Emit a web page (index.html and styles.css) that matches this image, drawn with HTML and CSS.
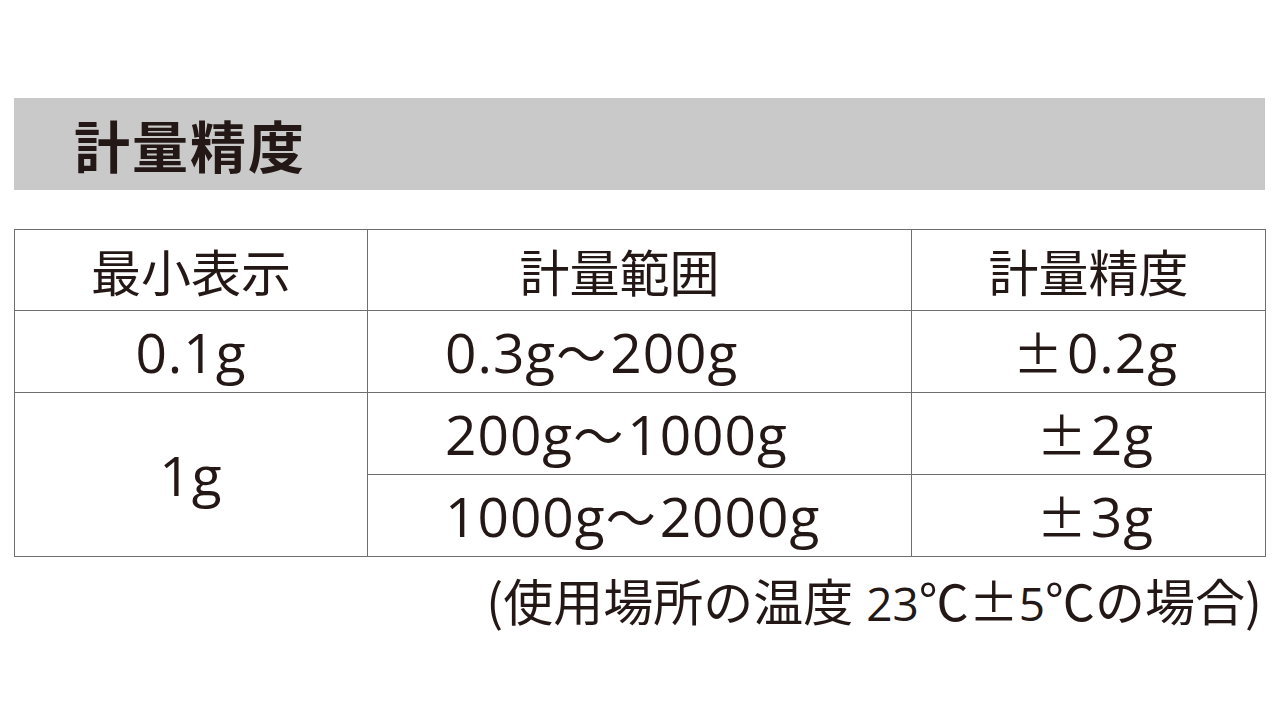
FILE: index.html
```html
<!DOCTYPE html>
<html lang="ja">
<head>
<meta charset="utf-8">
<link rel="stylesheet" href="styles.css">
</head>
<body>
<div class="page">
  <div class="title-bar"><h1 class="title">計量精度</h1></div>
  <table class="spec">
    <colgroup>
      <col class="c1"><col class="c2"><col class="c3">
    </colgroup>
    <tr class="head">
      <th>最小表示</th>
      <th class="range-head">計量範囲</th>
      <th>計量精度</th>
    </tr>
    <tr>
      <td>0.1g</td>
      <td class="range">0.3g<span class="cjk">～</span>200g</td>
      <td><span class="cjk">±</span>0.2g</td>
    </tr>
    <tr>
      <td rowspan="2">1g</td>
      <td class="range">200g<span class="cjk">～</span>1000g</td>
      <td><span class="cjk">±</span>2g</td>
    </tr>
    <tr>
      <td class="range">1000g<span class="cjk">～</span>2000g</td>
      <td><span class="cjk">±</span>3g</td>
    </tr>
  </table>
  <p class="note"><span class="cjk">(</span>使用場所の温度 <span class="small">23</span>℃<span class="cjk">±</span><span class="small">5</span>℃の場合<span class="cjk">)</span></p>
</div>
</body>
</html>
```

FILE: styles.css
```css
html, body {
  margin: 0;
  padding: 0;
  background: #ffffff;
}
body {
  font-family: "Open Sans", "Noto Sans CJK JP", sans-serif;
  color: #231815;
}
.page {
  padding: 98px 15px 0 14px;
}
.title-bar {
  background: #c9c9c9;
  height: 92px;
  display: flex;
  align-items: center;
  padding-left: 60px;
}
.title {
  margin: 0;
  font-family: "Noto Sans CJK JP", sans-serif;
  font-weight: 700;
  font-size: 56px;
  line-height: 1;
  letter-spacing: 2px;
}
.spec {
  margin-top: 39px;
  width: 1251px;
  border-collapse: collapse;
  table-layout: fixed;
}
.c1 { width: 353px; }
.c2 { width: 544px; }
.c3 { width: 354px; }
.spec th, .spec td {
  border: 1px solid #6f6f6f;
  height: 81px;
  padding: 0;
  font-weight: 400;
  font-size: 55px;
  letter-spacing: 1px;
  line-height: 1;
  text-align: center;
  vertical-align: middle;
}
.spec .head th {
  height: 80px;
  font-family: "Noto Sans CJK JP", sans-serif;
  font-size: 50px;
  letter-spacing: 0;
}
.spec th.range-head {
  padding-right: 40px;
}
.spec td.range {
  text-align: left;
  padding-left: 77px;
}
.cjk {
  font-family: "Noto Sans CJK JP", sans-serif;
  font-size: 50px;
}
.spec td .cjk {
  margin-right: 3px;
}
.spec td:last-child {
  padding-left: 14px;
}
.note {
  margin: 12px 0 0;
  padding-right: 3px;
  text-align: right;
  font-size: 50px;
  line-height: 1.2;
}
.note .small {
  font-size: 46px;
}
```
